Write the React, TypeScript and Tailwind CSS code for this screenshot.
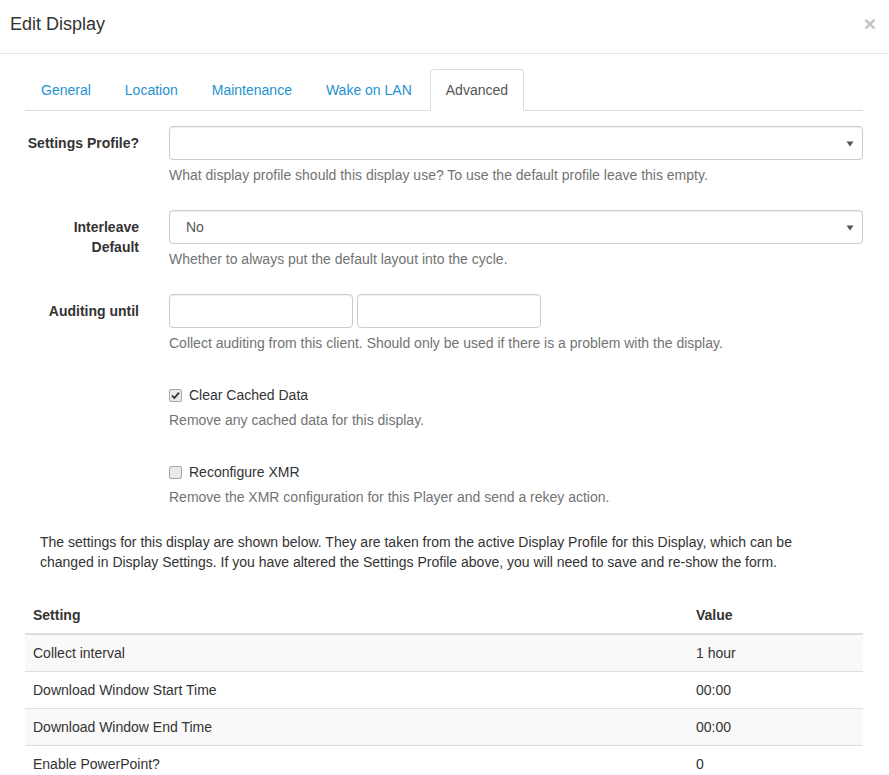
import React from "react";

const tabs = ["General", "Location", "Maintenance", "Wake on LAN", "Advanced"];

const settings = [
  { name: "Collect interval", value: "1 hour" },
  { name: "Download Window Start Time", value: "00:00" },
  { name: "Download Window End Time", value: "00:00" },
  { name: "Enable PowerPoint?", value: "0" },
];

const Caret = () => (
  <svg width="8" height="6" viewBox="0 0 8 6" className="absolute right-[8px] top-[14px]">
    <path d="M0.5 0.5 H7.5 L4 5.5 Z" fill="#555" />
  </svg>
);

const FakeSelect = ({ value }: { value?: string }) => (
  <div className="relative h-[34px] w-full rounded-[4px] border border-[#ccc] bg-white pl-[16px] text-[14px] leading-[32px] text-[#555] shadow-[inset_0_1px_1px_rgba(0,0,0,0.075)]">
    {value}
    <Caret />
  </div>
);

const Help = ({ children }: { children: React.ReactNode }) => (
  <p className="mt-[5px] mb-[10px] text-[14px] leading-[20px] text-[#737373]">{children}</p>
);

const Box = ({ checked }: { checked?: boolean }) => (
  <span className="flex h-[13px] w-[13px] items-center justify-center rounded-[2px] border border-[#a6a6a6] bg-[#e9e9e9]">
    {checked && (
      <svg width="9" height="9" viewBox="0 0 9 9">
        <path d="M1 4.6 L3.4 7 L8 1.6" fill="none" stroke="#333" strokeWidth="1.8" />
      </svg>
    )}
  </span>
);

const Row = ({ label, children }: { label?: React.ReactNode; children: React.ReactNode }) => (
  <div className="mb-[15px] flex">
    <div className="w-[144px] shrink-0 pt-[7px] pr-[15px] text-right text-[14px] font-bold leading-[20px] text-[#333]">
      {label}
    </div>
    <div className="flex-1 pr-[15px] pl-[15px]">{children}</div>
  </div>
);

export default function App() {
  return (
    <div className="h-[775px] overflow-hidden bg-white text-[#333]" style={{ fontFamily: '"Liberation Sans", Arial, sans-serif' }}>
      <div className="flex h-[54px] items-start justify-between border-b border-[#e5e5e5] pl-[10px] pr-[13px] pt-[11px]">
        <h4 className="text-[18px] leading-[26px] text-[#333]">Edit Display</h4>
        <span className="pt-[2px] text-[21px] font-bold leading-none text-[#c4c4c4]">×</span>
      </div>

      <div className="pt-[15px] pl-[25px] pr-[26px]">
        <ul className="flex border-b border-[#ddd] text-[14px] leading-[20px]">
          {tabs.map((t) => (
            <li key={t} className="mr-[2px] -mb-px">
              {t === "Advanced" ? (
                <span className="block rounded-t-[4px] border border-[#ddd] border-b-white bg-white px-[15px] py-[10px] text-[#555]">
                  {t}
                </span>
              ) : (
                <span className="block border border-transparent px-[15px] py-[10px] text-[#1f92d1]">{t}</span>
              )}
            </li>
          ))}
        </ul>

        <div className="-mx-[15px] pt-[15px]">
          <Row label="Settings Profile?">
            <FakeSelect />
            <Help>What display profile should this display use? To use the default profile leave this empty.</Help>
          </Row>

          <Row label={<>Interleave<br />Default</>}>
            <FakeSelect value="No" />
            <Help>Whether to always put the default layout into the cycle.</Help>
          </Row>

          <Row label="Auditing until">
            <div className="flex gap-[4px]">
              <div className="h-[34px] w-[184px] rounded-[4px] border border-[#ccc] bg-white shadow-[inset_0_1px_1px_rgba(0,0,0,0.075)]" />
              <div className="h-[34px] w-[184px] rounded-[4px] border border-[#ccc] bg-white shadow-[inset_0_1px_1px_rgba(0,0,0,0.075)]" />
            </div>
            <Help>Collect auditing from this client. Should only be used if there is a problem with the display.</Help>
          </Row>

          <Row>
            <div className="flex items-center gap-[7px] pt-[7px] text-[14px] leading-[20px] text-[#333]">
              <Box checked />
              Clear Cached Data
            </div>
            <Help>Remove any cached data for this display.</Help>
          </Row>

          <Row>
            <div className="flex items-center gap-[7px] pt-[7px] text-[14px] leading-[20px] text-[#333]">
              <Box />
              Reconfigure XMR
            </div>
            <Help>Remove the XMR configuration for this Player and send a rekey action.</Help>
          </Row>
        </div>

        <p className="px-[15px] pr-[30px] text-[14px] leading-[20px] text-[#333]">
          The settings for this display are shown below. They are taken from the active Display Profile for this Display, which can be changed in Display Settings. If you have altered the Settings Profile above, you will need to save and re-show the form.
        </p>

        <table className="mt-[25px] w-full border-collapse text-[14px] leading-[20px]">
          <thead>
            <tr className="border-b-2 border-[#ddd] text-left">
              <th className="p-[8px] font-bold">Setting</th>
              <th className="w-[175px] p-[8px] font-bold">Value</th>
            </tr>
          </thead>
          <tbody>
            {settings.map((s, i) => (
              <tr key={s.name} className={i % 2 === 0 ? "border-t border-[#ddd] bg-[#f9f9f9]" : "border-t border-[#ddd]"}>
                <td className="p-[8px]">{s.name}</td>
                <td className="p-[8px]">{s.value}</td>
              </tr>
            ))}
          </tbody>
        </table>
      </div>
    </div>
  );
}
